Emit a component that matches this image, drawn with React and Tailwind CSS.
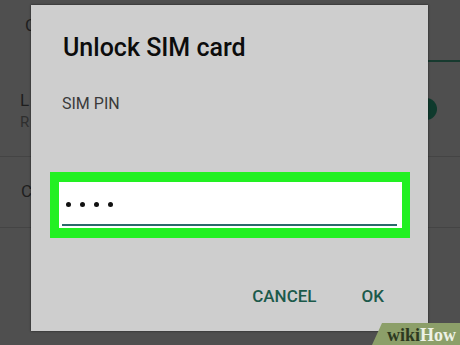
export default function App() {
  return (
    <div className="relative h-[345px] w-[460px] overflow-hidden bg-[#4f4f4f] font-['Roboto','Liberation_Sans',sans-serif]">
      {/* dimmed settings screen behind the dialog */}
      <div className="flex h-[62px]">
        <div className="pl-[25px] pt-[15px] text-[17px] leading-[20px] text-[#1e1e1e]">C</div>
        <div className="ml-auto w-[230px] border-b-2 border-[#173a2f]" />
      </div>
      <div className="flex h-[95px] items-center justify-between border-b border-[#444444]">
        <div className="pl-[20px] pt-[2px]">
          <p className="text-[17px] leading-[24px] text-[#1e1e1e]">L</p>
          <p className="text-[15px] leading-[20px] text-[#2e2e2e]">R</p>
        </div>
        <div className="mr-[23px] h-[22px] w-[22px] rounded-full bg-[#0f3a2d]" />
      </div>
      <div className="flex h-[71px] items-center border-b border-[#444444]">
        <div className="pl-[21px] text-[17px] text-[#1e1e1e]">C</div>
      </div>

      {/* dialog */}
      <div className="absolute left-[31px] top-[5px] flex h-[326px] w-[397px] flex-col bg-[#cecece] shadow-[0_0_2px_rgba(0,0,0,0.6)]">
        <h1 className="pl-[32px] pt-[28px] text-[25px] font-medium leading-[30px] text-[#0c0c0c]">Unlock SIM card</h1>
        <p className="mt-[31px] pl-[31px] text-[16px] leading-[20px] text-[#3a3a3a]">SIM PIN</p>
        <div className="ml-[19px] mt-[58px] h-[66px] w-[360px] bg-[#22f022] pb-[10px] pl-[9px] pr-[8px] pt-[10px]">
          <div className="flex h-full flex-col bg-white">
            <div className="flex flex-1 items-center gap-[9px] pl-[7px] pt-[2px]">
              <span className="h-[5px] w-[5px] rounded-full bg-[#111]" />
              <span className="h-[5px] w-[5px] rounded-full bg-[#111]" />
              <span className="h-[5px] w-[5px] rounded-full bg-[#111]" />
              <span className="h-[5px] w-[5px] rounded-full bg-[#111]" />
            </div>
            <div className="mb-[2px] ml-[3px] mr-[5px] h-[2px] bg-[#2b6b69]" />
          </div>
        </div>
        <div className="mt-[48px] flex justify-end gap-[45px] pr-[44px] text-[17px] font-medium leading-[20px] text-[#1c5a4b]">
          <span>CANCEL</span>
          <span>OK</span>
        </div>
      </div>

      {/* watermark */}
      <div className="absolute bottom-0 right-0 flex h-[22px] w-[88px] items-end justify-end bg-[#8c9f69] pr-[4px] [clip-path:polygon(10px_0,100%_0,100%_100%,0_100%)]">
        <span className="font-['Liberation_Serif',serif] text-[18px] font-bold leading-[20px]">
          <span className="text-[#2c391f]">wiki</span>
          <span className="text-[#eef2e6]">How</span>
        </span>
      </div>
    </div>
  );
}
